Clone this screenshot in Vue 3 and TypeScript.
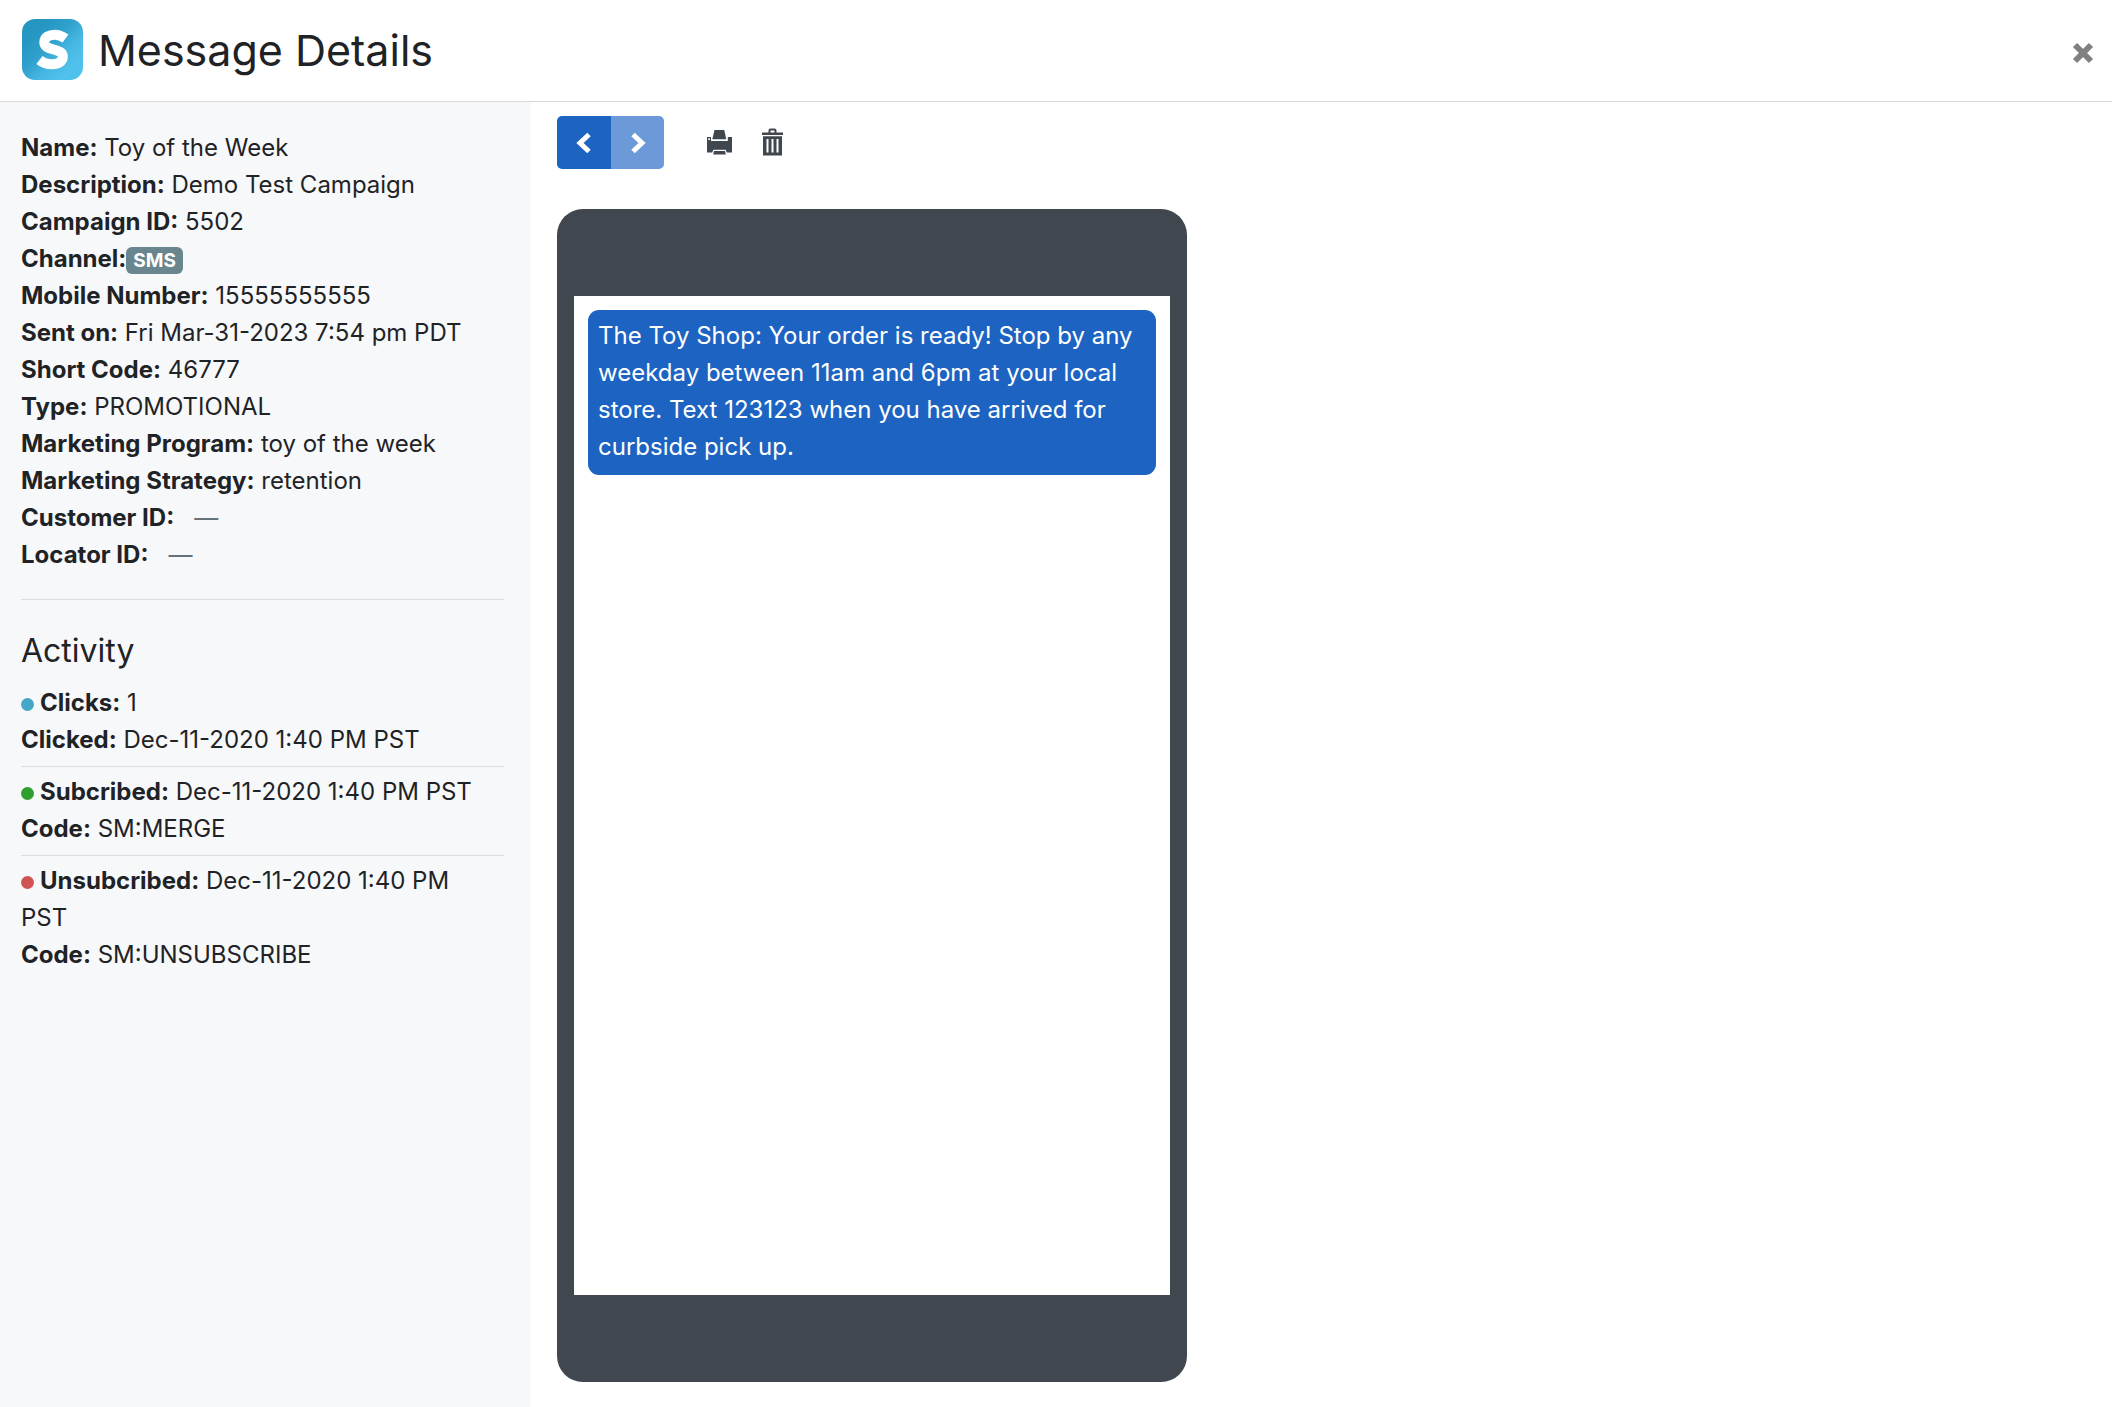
<script setup lang="ts">
interface Detail {
  label: string
  value?: string
  badge?: boolean
}

interface Activity {
  tone: 'info' | 'success' | 'danger'
  rows: Detail[]
}

const details: Detail[] = [
  { label: 'Name:', value: 'Toy of the Week' },
  { label: 'Description:', value: 'Demo Test Campaign' },
  { label: 'Campaign ID:', value: '5502' },
  { label: 'Channel:', value: 'SMS', badge: true },
  { label: 'Mobile Number:', value: '15555555555' },
  { label: 'Sent on:', value: 'Fri Mar-31-2023 7:54 pm PDT' },
  { label: 'Short Code:', value: '46777' },
  { label: 'Type:', value: 'PROMOTIONAL' },
  { label: 'Marketing Program:', value: 'toy of the week' },
  { label: 'Marketing Strategy:', value: 'retention' },
  { label: 'Customer ID:' },
  { label: 'Locator ID:' },
]

const activities: Activity[] = [
  {
    tone: 'info',
    rows: [
      { label: 'Clicks:', value: '1' },
      { label: 'Clicked:', value: 'Dec-11-2020 1:40 PM PST' },
    ],
  },
  {
    tone: 'success',
    rows: [
      { label: 'Subcribed:', value: 'Dec-11-2020 1:40 PM PST' },
      { label: 'Code:', value: 'SM:MERGE' },
    ],
  },
  {
    tone: 'danger',
    rows: [
      { label: 'Unsubcribed:', value: 'Dec-11-2020 1:40 PM PST' },
      { label: 'Code:', value: 'SM:UNSUBSCRIBE' },
    ],
  },
]
</script>

<template>
  <div class="page">
    <header class="header">
      <svg class="logo" viewBox="0 0 61 61" aria-hidden="true">
        <defs>
          <linearGradient id="logo-fill" x1="0" y1="0" x2="1" y2="1">
            <stop offset="0.2" stop-color="#2596c1" />
            <stop offset="0.42" stop-color="#2fa0cb" />
            <stop offset="0.62" stop-color="#46b7e2" />
            <stop offset="0.8" stop-color="#50c1ed" />
          </linearGradient>
        </defs>
        <rect width="61" height="61" rx="13" fill="url(#logo-fill)" />
        <path
          d="M43.500 19.500C40 17 37 15.700 33 15.700C27 15.700 22.300 18 22.300 23.300C22.300 27.500 25.500 28.800 31.500 30.500C37.500 32.200 40.800 33.200 40.800 37.500C40.800 42.800 36 45.300 30 45.300C25 45.300 21 43.800 17.500 41"
          fill="none"
          stroke="#fff"
          stroke-width="10"
        />
      </svg>
      <h1 class="title">Message Details</h1>
      <button class="close" type="button" aria-label="Close">
        <svg width="22" height="22" viewBox="0 0 22 22" aria-hidden="true">
          <path d="M3 3L19 19M19 3L3 19" stroke="#808080" stroke-width="6" />
        </svg>
      </button>
    </header>

    <div class="body">
      <aside class="sidebar">
        <div v-for="item in details" :key="item.label" class="row">
          <strong>{{ item.label }}</strong>
          <span v-if="item.badge" class="badge">{{ item.value }}</span>
          <template v-else-if="item.value">{{ ' ' + item.value }}</template>
          <span v-else class="empty">—</span>
        </div>

        <hr class="divider" />

        <h2 class="subtitle">Activity</h2>
        <section v-for="activity in activities" :key="activity.tone" class="activity">
          <div v-for="(item, i) in activity.rows" :key="item.label" class="row">
            <span v-if="i === 0" class="dot" :class="activity.tone"></span
            ><strong>{{ item.label }}</strong> {{ item.value }}
          </div>
        </section>
      </aside>

      <main class="main">
        <div class="toolbar">
          <div class="pager">
            <button class="page-btn" type="button" aria-label="Previous message">
              <svg width="16" height="22" viewBox="0 0 16 22" aria-hidden="true">
                <path d="M13 2.500L4 11L13 19.500" fill="none" stroke="#fff" stroke-width="5" />
              </svg>
            </button>
            <button class="page-btn" type="button" aria-label="Next message" disabled>
              <svg width="16" height="22" viewBox="0 0 16 22" aria-hidden="true">
                <path d="M3 2.500L12 11L3 19.500" fill="none" stroke="#fff" stroke-width="5" />
              </svg>
            </button>
          </div>
          <button class="icon-btn" type="button" aria-label="Print">
            <svg width="25" height="26" viewBox="0 0 25 26" aria-hidden="true">
              <path
                fill="#41474f"
                fill-rule="evenodd"
                d="M7.500 1L17.300 1L19.200 10.300L5.300 10.300ZM0 8L4 8L4 12L20.800 12L20.800 8L25 8L25 23.500L19.800 23.500L18.600 20.800L6.400 20.800L5.200 23.500L0 23.500ZM1.300 9.200L1.300 11L3 11L3 9.200ZM7 22L18 22L18.800 25.500L6.200 25.500Z"
              />
            </svg>
          </button>
          <button class="icon-btn" type="button" aria-label="Delete">
            <svg width="21" height="28" viewBox="0 0 21 28" aria-hidden="true">
              <path d="M7.500 5L7.500 2.500Q7.500 1.500 8.500 1.500L12.500 1.500Q13.500 1.500 13.500 2.500L13.500 5" fill="none" stroke="#41474f" stroke-width="2" />
              <path
                fill="#41474f"
                fill-rule="evenodd"
                d="M0 4.500H21V7H0ZM1 8.300H20V27.500H1ZM4.500 11V24.500H6.500V11ZM9.500 11V24.500H11.500V11ZM14.500 11V24.500H16.500V11Z"
              />
            </svg>
          </button>
        </div>

        <div class="phone">
          <div class="screen">
            <p class="bubble">
              The Toy Shop: Your order is ready! Stop by any weekday between 11am and 6pm at your
              local store. Text 123123 when you have arrived for curbside pick up.
            </p>
          </div>
        </div>
      </main>
    </div>
  </div>
</template>

<style>
body {
  margin: 0;
  background: #fff;
}
</style>

<style scoped>
.page {
  display: flex;
  flex-direction: column;
  min-height: 100vh;
  font-family: Inter, 'Liberation Sans', sans-serif;
  font-size: 24px;
  line-height: 37px;
  color: #1f2326;
}

button {
  display: flex;
  align-items: center;
  justify-content: center;
  padding: 0;
  border: 0;
  background: none;
  cursor: pointer;
}

.header {
  display: flex;
  align-items: center;
  height: 99px;
  padding: 0 18px 2px 22px;
  border-bottom: 1px solid #d6d8db;
}

.logo {
  width: 61px;
  height: 61px;
}

.title {
  margin: 0 auto 0 15px;
  font-size: 43px;
  line-height: 50px;
  font-weight: 400;
}

.close {
  padding-top: 6px;
}

.body {
  display: flex;
  flex: 1;
}

.sidebar {
  box-sizing: border-box;
  flex: 0 0 531px;
  padding: 27px 27px 27px 21px;
  background: #f7f8fa;
}

.row {
  padding-right: 8px;
}

strong {
  font-weight: 700;
}

.badge {
  display: inline-block;
  padding: 0 7px;
  border-radius: 6px;
  background: #69858d;
  color: #fff;
  font-size: 19px;
  line-height: 27px;
  font-weight: 700;
}

.empty {
  margin-left: 20px;
  color: #66717a;
}

.divider {
  height: 1px;
  margin: 26px 0 0;
  border: 0;
  background: #dcdee1;
}

.subtitle {
  margin: 30px 0 13px;
  font-size: 32px;
  line-height: 41px;
  font-weight: 400;
}

.activity + .activity {
  margin-top: 8px;
  padding-top: 6px;
  border-top: 1px solid #dcdee1;
}

.dot {
  display: inline-block;
  width: 13px;
  height: 13px;
  margin-right: 6px;
  border-radius: 50%;
}

.info {
  background: #45a6c8;
}

.success {
  background: #2e9e2e;
}

.danger {
  background: #cf5353;
}

.main {
  flex: 1;
  min-width: 0;
  padding: 14px 26px 25px;
}

.toolbar {
  display: flex;
  align-items: center;
  margin-bottom: 40px;
}

.pager {
  display: flex;
  margin-right: 43px;
  border-radius: 5px;
  overflow: hidden;
}

.page-btn {
  width: 54px;
  height: 53px;
  background: #1d63c1;
}

.page-btn:disabled {
  width: 53px;
  background: #6c99d8;
}

.icon-btn {
  padding-bottom: 2px;
}

.icon-btn + .icon-btn {
  margin-left: 30px;
}

.phone {
  box-sizing: border-box;
  width: 630px;
  max-width: 100%;
  padding: 87px 17px;
  border-radius: 26px;
  background: #41474f;
}

.screen {
  box-sizing: border-box;
  min-height: 999px;
  padding: 14px;
  background: #fff;
}

.bubble {
  margin: 0;
  padding: 7px 10px 10px;
  border-radius: 11px;
  background: #1d63c1;
  color: #fff;
}
</style>
